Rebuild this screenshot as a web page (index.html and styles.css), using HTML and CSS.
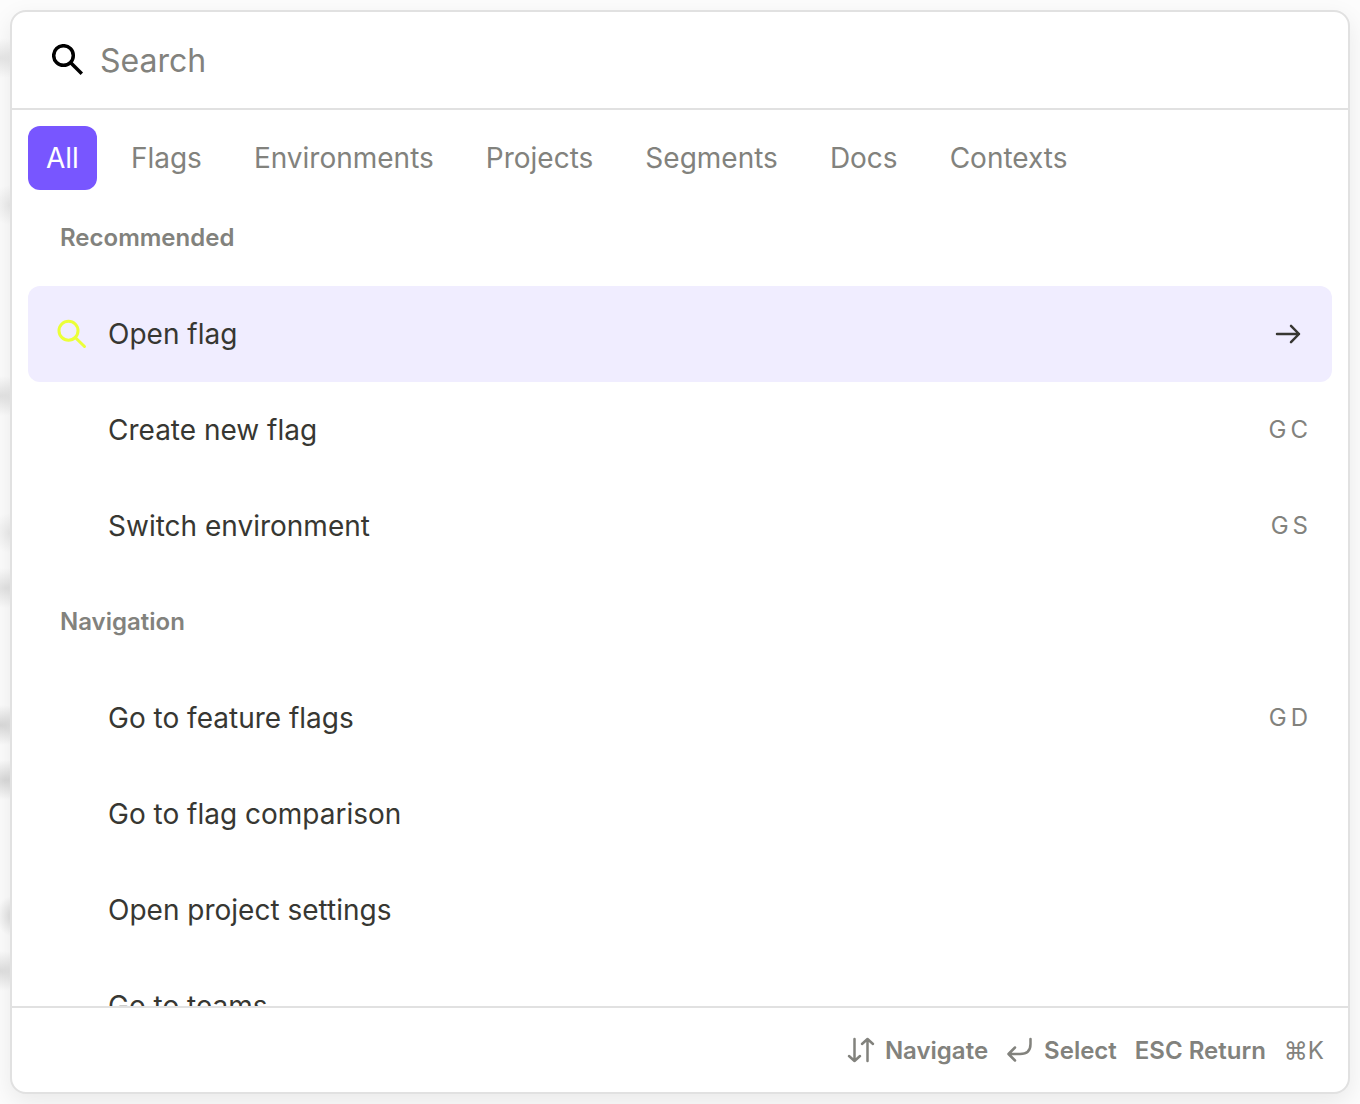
FILE: index.html
```html
<!DOCTYPE html>
<html lang="en">
<head>
    <meta charset="UTF-8">
    <meta name="viewport" content="width=device-width, initial-scale=1.0">
    <title>Search</title>
    <link rel="stylesheet" href="styles.css">
</head>
<body>
    <main class="palette">
        <header class="search">
            <label for="query">
                <svg class="search-icon" viewBox="0 0 32 32" aria-label="Search"><circle cx="11.500" cy="11.500" r="9.800"/><path d="M19 19 L29.800 29.800"/></svg>
            </label>
            <input type="text" id="query" placeholder="Search">
        </header>

        <nav class="tabs">
            <button type="button" class="tab active">All</button>
            <button type="button" class="tab">Flags</button>
            <button type="button" class="tab">Environments</button>
            <button type="button" class="tab">Projects</button>
            <button type="button" class="tab">Segments</button>
            <button type="button" class="tab">Docs</button>
            <button type="button" class="tab">Contexts</button>
        </nav>

        <div class="results">
            <h2 class="group">Recommended</h2>
            <ul>
                <li><a href="#open-flag" class="item selected">
                    <svg class="item-icon" viewBox="0 0 32 32" aria-hidden="true"><circle cx="12.500" cy="12.700" r="9.500"/><path d="M19.500 19.700 L28.500 28.500"/></svg>
                    <span class="name">Open flag</span>
                    <svg class="arrow" viewBox="0 0 32 32" aria-hidden="true"><path d="M5 16 H27 M19 7.800 L27 16 L19 24.200"/></svg>
                </a></li>
                <li><a href="#create-flag" class="item"><span class="name">Create new flag</span><span class="keys"><kbd>G</kbd><kbd>C</kbd></span></a></li>
                <li><a href="#switch-environment" class="item"><span class="name">Switch environment</span><span class="keys"><kbd>G</kbd><kbd>S</kbd></span></a></li>
            </ul>
            <h2 class="group">Navigation</h2>
            <ul>
                <li><a href="#flags" class="item"><span class="name">Go to feature flags</span><span class="keys"><kbd>G</kbd><kbd>D</kbd></span></a></li>
                <li><a href="#comparison" class="item"><span class="name">Go to flag comparison</span></a></li>
                <li><a href="#settings" class="item"><span class="name">Open project settings</span></a></li>
                <li><a href="#teams" class="item"><span class="name">Go to teams</span></a></li>
            </ul>
        </div>

        <footer class="hints">
            <span class="hint">
                <svg class="hint-icon" viewBox="0 0 28 28" aria-hidden="true"><path d="M7.500 3 V25 M2 20 L7.500 25 L13 20 M20.500 25 V3 M15 8 L20.500 3 L26 8"/></svg>
                Navigate
            </span>
            <span class="hint">
                <svg class="hint-icon" viewBox="0 0 28 28" aria-hidden="true"><path d="M24.500 3 V8 C24.500 15 21 18 14 18 H3 M9 11.500 L2.500 18 L9 24.500"/></svg>
                Select
            </span>
            <span class="hint">ESC Return</span>
            <span class="hint shortcut">⌘K</span>
        </footer>
    </main>
</body>
</html>
```
FILE: styles.css
```css
* {
    box-sizing: border-box;
}
body {
    margin: 0;
    padding: 10px;
    font-family: Inter, sans-serif;
    color: #373732;
    /* blurred rows of the page behind the palette */
    background-color: #fcfcfc;
    background-image:
        radial-gradient(40px 20px at 0 58px, #e6e6e6, transparent),
        radial-gradient(20px 20px at 10px 205px, #ebebeb, transparent),
        radial-gradient(40px 20px at 0 396px, #e2e2e2, transparent),
        radial-gradient(20px 20px at 10px 533px, #ebebeb, transparent),
        radial-gradient(40px 20px at 6px 588px, #e2e2e2, transparent),
        radial-gradient(40px 20px at 0 725px, #d8d8d8, transparent),
        radial-gradient(40px 20px at 6px 780px, #d8d8d8, transparent),
        radial-gradient(16px 20px at 12px 916px, #dedede, transparent),
        radial-gradient(40px 20px at 0 971px, #dedede, transparent);
}
.palette {
    display: flex;
    flex-direction: column;
    height: calc(100vh - 20px);
    overflow: hidden;
    background-color: #fff;
    border: 2px solid #e1e1e1;
    border-radius: 16px;
    box-shadow: 0 8px 24px rgba(0, 0, 0, 0.08);
}
.search {
    display: flex;
    align-items: center;
    gap: 16px;
    flex: none;
    height: 98px;
    padding: 0 40px;
    border-bottom: 2px solid #e1e1e1;
}
svg {
    display: block;
    flex: none;
    fill: none;
    stroke: currentColor;
}
.search-icon {
    width: 32px;
    height: 32px;
    color: #000;
    stroke-width: 3.5;
}
.search input {
    flex: 1;
    min-width: 0;
    padding: 2px 0 0;
    border: none;
    outline: none;
    background: none;
    font: 400 32px/40px Inter, sans-serif;
    color: #373732;
}
.search input::placeholder {
    color: #82827d;
    opacity: 1;
}
.tabs {
    display: flex;
    gap: 16px;
    flex: none;
    padding: 16px 16px 0;
}
.tab {
    height: 64px;
    padding: 0 18px;
    border: none;
    border-radius: 12px;
    background: none;
    font: 400 28px/40px Inter, sans-serif;
    color: #82827d;
    cursor: pointer;
}
.tab.active {
    background-color: #7856ff;
    color: #fff;
}
.results {
    flex: 1;
    min-height: 0;
    overflow-y: auto;
    scrollbar-width: none;
    padding: 0 16px;
}
.results ul {
    margin: 0;
    padding: 0;
    list-style: none;
}
.group {
    margin: 0;
    padding: 0 32px;
    font-size: 24px;
    font-weight: 600;
    line-height: 96px;
    color: #82827d;
}
.item {
    display: flex;
    align-items: center;
    height: 96px;
    padding: 0 24px 0 80px;
    border-radius: 12px;
    font-size: 28px;
    color: inherit;
    text-decoration: none;
}
.item.selected {
    padding: 0 28px;
    background-color: #f0edff;
}
.item-icon {
    width: 32px;
    height: 32px;
    margin-right: 20px;
    color: #ebff38;
    stroke-width: 3;
    stroke-linecap: round;
}
.arrow {
    width: 32px;
    height: 32px;
    stroke-width: 2.5;
    stroke-linecap: round;
    stroke-linejoin: round;
}
.name {
    flex: 1;
}
.keys {
    display: flex;
    gap: 4px;
}
kbd {
    font: 400 24px/32px Inter, sans-serif;
    color: #82827d;
}
.hints {
    display: flex;
    align-items: center;
    justify-content: flex-end;
    gap: 18px;
    flex: none;
    height: 86px;
    padding: 0 24px;
    border-top: 2px solid #e1e1e1;
    font-size: 24px;
    font-weight: 600;
    color: #82827d;
}
.hint {
    display: flex;
    align-items: center;
    gap: 10px;
}
.hint-icon {
    width: 28px;
    height: 28px;
    stroke-width: 2.5;
    stroke-linecap: round;
    stroke-linejoin: round;
}
.shortcut {
    font-weight: 400;
}
```
